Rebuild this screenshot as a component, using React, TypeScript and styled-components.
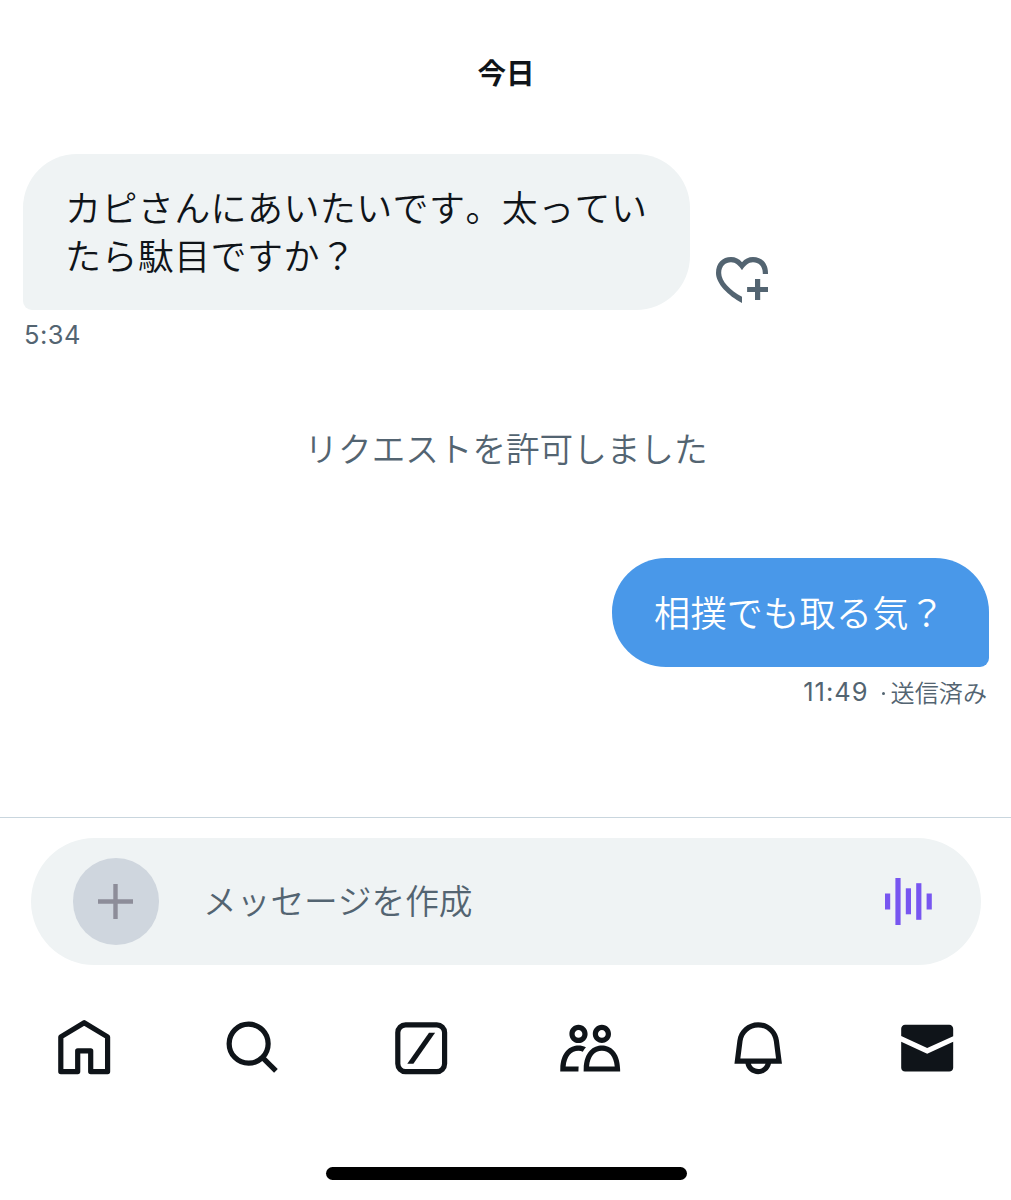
import React from "react";
import styled, { createGlobalStyle } from "styled-components";

const GlobalStyle = createGlobalStyle`
  * { box-sizing: border-box; }
  body {
    margin: 0;
    background: #fff;
    font-family: Inter, "Noto Sans CJK JP", sans-serif;
  }
`;

const ink = "#0f1419";
const slate = "#536471";
const mist = "#eff3f4";

const Screen = styled.div`
  width: 1011px;
  height: 1200px;
  display: flex;
  flex-direction: column;
  background: #fff;
  overflow: hidden;
  font-kerning: none;
`;

const Thread = styled.main`
  height: 817px;
  display: flex;
  flex-direction: column;
  padding: 51px 22px 0 23px;
`;

const DayHeading = styled.h1`
  margin: 0;
  height: 42px;
  text-align: center;
  font: 700 28.6px/42px "Noto Sans CJK JP", sans-serif;
  font-kerning: none;
  color: ${ink};
`;

const MessageRow = styled.div<{ $top: number; $mine?: boolean }>`
  display: flex;
  justify-content: ${(p) => (p.$mine ? "flex-end" : "flex-start")};
  align-items: flex-end;
  gap: 21px;
  margin-top: ${(p) => p.$top}px;
`;

const Bubble = styled.p<{ $mine?: boolean }>`
  margin: 0;
  width: ${(p) => (p.$mine ? 377 : 667)}px;
  height: ${(p) => (p.$mine ? 109 : 156)}px;
  padding: ${(p) => (p.$mine ? "30px 0 0 42px" : "29px 0 0 42px")};
  border-radius: ${(p) => (p.$mine ? "54px 54px 9px 54px" : "54px 54px 54px 9px")};
  background: ${(p) => (p.$mine ? "#4998e9" : mist)};
  color: ${(p) => (p.$mine ? "#fff" : ink)};
  font: 350 36px/47.5px "Noto Sans CJK JP", sans-serif;
  font-kerning: none;
  letter-spacing: 0.4px;
  white-space: pre-line;
`;

const Meta = styled.div<{ $mine?: boolean }>`
  display: flex;
  justify-content: ${(p) => (p.$mine ? "flex-end" : "flex-start")};
  align-items: center;
  height: 36px;
  margin-top: 7px;
  padding: ${(p) => (p.$mine ? "0 2px 0 0" : "0 1px")};
  color: ${slate};
  font: 400 25.5px/36px Inter, sans-serif;
  letter-spacing: ${(p) => (p.$mine ? 1 : 0.5)}px;
`;

const Status = styled.span`
  margin-left: 11px;
  font: 350 24.1px/36px "Noto Sans CJK JP", sans-serif;
  font-kerning: none;
  letter-spacing: 0;
`;

const Dot = styled.span`
  display: inline-block;
  width: 3px;
  height: 3px;
  margin: 0 6px 4px 2px;
  border-radius: 50%;
  background: ${slate};
  vertical-align: middle;
`;

const Notice = styled.p`
  margin: 70px 0 0;
  height: 50px;
  text-align: center;
  color: ${slate};
  font: 350 33.6px/50px "Noto Sans CJK JP", sans-serif;
  font-kerning: none;
`;

const Reaction = styled.svg`
  width: 62px;
  height: 62px;
  display: block;
`;

const ComposerArea = styled.section`
  height: 148px;
  padding: 20px 30px 0 31px;
  border-top: 1px solid #c9d6de;
`;

const Composer = styled.div`
  display: flex;
  align-items: center;
  height: 126.5px;
  padding: 0 48.5px 0 41.5px;
  border-radius: 64px;
  background: ${mist};
`;

const AddButton = styled.button`
  width: 86.5px;
  height: 86.5px;
  padding: 0;
  border: 0;
  border-radius: 50%;
  background: #cfd6de;
  display: grid;
  place-items: center;
`;

const Placeholder = styled.span`
  flex: 1;
  margin-left: 44px;
  padding-bottom: 2px;
  color: ${slate};
  font: 350 33.7px/50px "Noto Sans CJK JP", sans-serif;
  font-kerning: none;
`;

const Nav = styled.nav`
  display: grid;
  grid-template-columns: repeat(6, 1fr);
  justify-items: center;
  align-items: center;
  height: 62.4px;
  margin-top: 52.3px;
`;

const NavIcon = styled.svg`
  width: 62.4px;
  height: 62.4px;
  display: block;
  fill: ${ink};
`;

const HomeIndicator = styled.div`
  width: 361px;
  height: 13px;
  margin: 87.3px 0 0 326px;
  border-radius: 7px;
  background: #000;
`;

const bars = [
  [0, 15.5, 16],
  [10.4, 0, 47],
  [20.8, 10.3, 26],
  [31.2, 5.2, 36.6],
  [41.6, 15.5, 16],
];

export default function App() {
  return (
    <Screen>
      <GlobalStyle />
      <Thread>
        <DayHeading>今日</DayHeading>
        <MessageRow $top={61}>
          <Bubble>{"カピさんにあいたいです。太ってい\nたら駄目ですか？"}</Bubble>
          <Reaction viewBox="711 248 62 62" fill={slate}>
            <path d="M742 303C728 295.500 716 283.500 716 273C716 263 722.500 257 731 257C735.500 257 739.500 259 742 262.300C744.500 259 748.500 257 753 257C761.500 257 768 263 768 273V274H762.800V273C762.800 266 758.500 262.200 753 262.200C748.500 262.200 745 265.500 742 270.300C739 265.500 735.500 262.200 731 262.200C725.500 262.200 721.200 266 721.200 273C721.200 281 730 290.500 742 296.800Z" />
            <path d="M755 279h5.200v7.900h7.800v5.200h-7.800v7.900h-5.200v-7.900h-7.900v-5.200h7.900z" />
          </Reaction>
        </MessageRow>
        <Meta>5:34</Meta>
        <Notice>リクエストを許可しました</Notice>
        <MessageRow $top={85} $mine>
          <Bubble $mine>相撲でも取る気？</Bubble>
        </MessageRow>
        <Meta $mine>
          11:49
          <Status>
            <Dot />
            送信済み
          </Status>
        </Meta>
      </Thread>

      <ComposerArea>
        <Composer>
          <AddButton aria-label="追加">
            <svg width="35" height="35" viewBox="0 0 35 35">
              <path d="M17.500 0V35M0 17.500H35" stroke="#8d8d99" strokeWidth="4.400" />
            </svg>
          </AddButton>
          <Placeholder>メッセージを作成</Placeholder>
          <svg width="48" height="47" viewBox="0 0 48 47" fill="#7856f0">
            {bars.map(([x, y, h]) => (
              <rect key={x} x={x} y={y} width="5.200" height={h} />
            ))}
          </svg>
        </Composer>
      </ComposerArea>

      <Nav>
        <NavIcon viewBox="0 0 24 24">
          <path
            d="M3 21V7.650L12 2.200L21 7.650V21H14.500V13H9.500V21Z"
            fill="none"
            stroke={ink}
            strokeWidth="2"
            strokeLinejoin="round"
          />
        </NavIcon>
        <NavIcon viewBox="0 0 24 24">
          <g fill="none" stroke={ink} strokeWidth="2">
            <circle cx="10.250" cy="10.250" r="7.500" />
            <path d="M15.600 15.600L20.750 20.750" />
          </g>
        </NavIcon>
        <NavIcon viewBox="0 0 24 24">
          <rect x="3" y="3" width="18" height="18" rx="3" fill="none" stroke={ink} strokeWidth="2" />
          <path d="M6.650 18H9L17.350 6.100H15Z" />
        </NavIcon>
        <NavIcon viewBox="0 0 24 24">
          <path d="M7.501 19.917L7.471 21H.472l.029-1.027c.184-6.618 3.736-8.977 7-8.977.963 0 1.950.212 2.870.672-.444.478-.851 1.030-1.212 1.656-.507-.204-1.054-.329-1.658-.329-2.767 0-4.570 2.223-4.938 6.004H7.560c-.023.302-.050.599-.059.917zm15.998.056L23.528 21H9.472l.029-1.027c.184-6.618 3.736-8.977 7-8.977s6.816 2.358 7 8.977zM21.437 19c-.367-3.781-2.170-6.004-4.938-6.004s-4.570 2.223-4.938 6.004h9.875zm-4.938-9c-.799 0-1.527-.279-2.116-.730-.836-.640-1.384-1.638-1.384-2.770 0-1.930 1.567-3.500 3.500-3.500s3.500 1.570 3.500 3.500c0 1.132-.548 2.130-1.384 2.770-.589.451-1.317.730-2.116.730zm-1.500-3.500c0 .827.673 1.500 1.500 1.500s1.500-.673 1.500-1.500-.673-1.500-1.500-1.500-1.500.673-1.500 1.500zM7.500 3C9.433 3 11 4.570 11 6.500S9.433 10 7.500 10 4 8.430 4 6.500 5.567 3 7.500 3zm0 2C6.673 5 6 5.673 6 6.500S6.673 8 7.500 8 9 7.327 9 6.500 8.327 5 7.500 5z" />
        </NavIcon>
        <NavIcon viewBox="0 0 24 24">
          <path d="M19.993 9.042C19.480 5.017 16.054 2 11.996 2s-7.490 3.021-7.999 7.051L2.866 18H7.100c.463 2.282 2.481 4 4.900 4s4.437-1.718 4.900-4h4.236l-1.143-8.958zM12 20c-1.306 0-2.417-.835-2.829-2h5.658c-.412 1.165-1.523 2-2.829 2zm-6.866-4l.847-6.698C6.364 6.272 8.941 4 11.996 4s5.627 2.268 6.013 5.295L18.864 16H5.134z" />
        </NavIcon>
        <NavIcon viewBox="0 0 24 24">
          <path d="M1.998 4.499c0-.828.671-1.499 1.500-1.499h17c.828 0 1.500.671 1.500 1.499v2.858l-10 4.545-10-4.547V4.499zm0 5.053V19.500c0 .828.672 1.500 1.500 1.500h17c.829 0 1.500-.672 1.500-1.500V9.554l-10 4.545-10-4.547z" />
        </NavIcon>
      </Nav>
      <HomeIndicator />
    </Screen>
  );
}
